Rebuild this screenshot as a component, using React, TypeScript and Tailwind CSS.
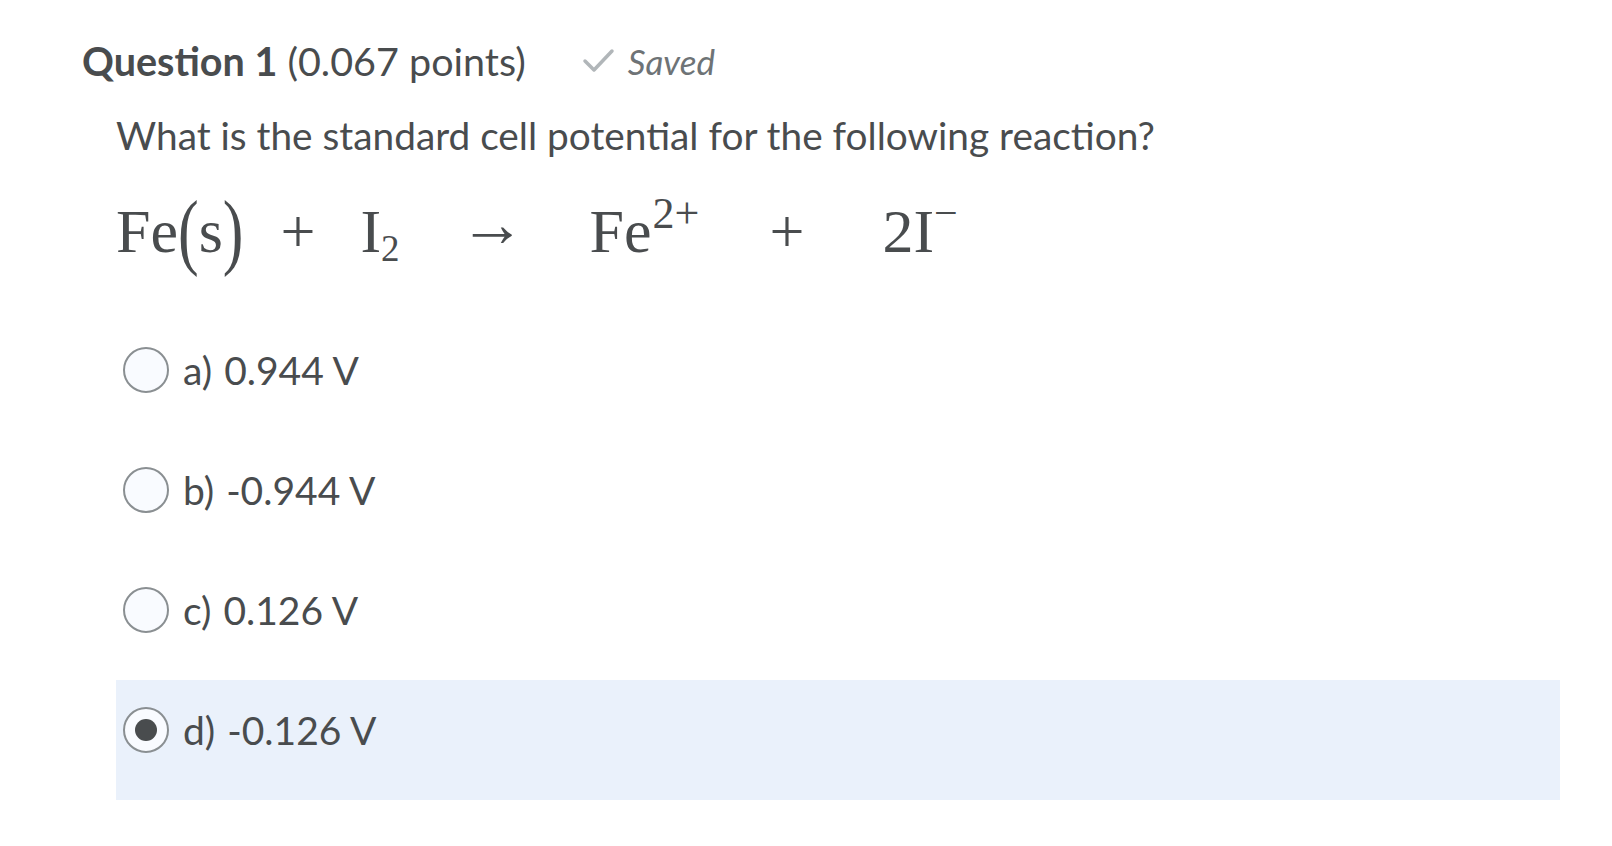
import React, { useState } from "react";

const options = [
  { id: "a", label: "a)", value: "0.944 V" },
  { id: "b", label: "b)", value: "-0.944 V" },
  { id: "c", label: "c)", value: "0.126 V" },
  { id: "d", label: "d)", value: "-0.126 V" },
];

const Radio: React.FC<{ checked: boolean }> = ({ checked }) => (
  <span className="flex h-[46px] w-[46px] shrink-0 items-center justify-center rounded-full border-2 border-[#8a8f92] bg-[#f9fbff]">
    {checked && <span className="h-[22px] w-[22px] rounded-full bg-[#494c4e]" />}
  </span>
);

export default function App() {
  const [selected, setSelected] = useState("d");

  return (
    <div className="min-h-screen bg-white text-[#494c4e]" style={{ fontFamily: "Lato, 'Open Sans', sans-serif" }}>
      <div className="pl-[82px] pt-[38px] pr-[52px]">
        {/* heading */}
        <div className="flex h-[46px] items-center">
          <h2 className="text-[39.5px] leading-[46px]">
            <span className="font-bold">Question 1</span> (0.067 points)
          </h2>
          <span className="ml-[56px] flex items-center text-[#6e7376]">
            <svg width="34" height="28" viewBox="0 0 34 28" className="mr-[12px]">
              <polyline points="3,14 12,23 30,4" fill="none" stroke="#b1b6b9" strokeWidth="3.5" strokeLinecap="round" strokeLinejoin="round" />
            </svg>
            <span className="text-[35px] italic leading-[46px]">Saved</span>
          </span>
        </div>

        <div className="pl-[34px]">
          {/* question text */}
          <p className="mt-[28px] text-[38.8px] leading-[46px]">
            What is the standard cell potential for the following reaction?
          </p>

          {/* equation */}
          <div
            className="mt-[36px] flex h-[72px] items-baseline text-[62px] leading-[72px] text-[#494c4e]"
            style={{ fontFamily: "'Liberation Serif', 'Times New Roman', serif" }}
          >
            <span>Fe</span>
            <span className="inline-block scale-y-[1.35]">(</span>
            <span>s</span>
            <span className="inline-block scale-y-[1.35]">)</span>
            <span className="ml-[37px]">+</span>
            <span className="ml-[45px]">
              I<sub className="text-[37px] leading-none">2</sub>
            </span>
            <span className="relative -top-[6px] ml-[60px] text-[66px]">→</span>
            <span className="ml-[64px]">
              Fe<sup className="top-[-0.55em] ml-[1px] text-[44px] leading-none">2+</sup>
            </span>
            <span className="ml-[70px]">+</span>
            <span className="ml-[78px]">
              2I<sup className="top-[-0.6em] text-[42px] leading-none">−</sup>
            </span>
          </div>

          {/* options */}
          <div className="mt-[54px]">
            {options.map((o) => (
              <div
                key={o.id}
                onClick={() => setSelected(o.id)}
                className={`flex h-[120px] cursor-pointer items-start pl-[7px] pt-[27px] ${
                  selected === o.id ? "bg-[#eaf1fb]" : ""
                }`}
              >
                <Radio checked={selected === o.id} />
                <span className="ml-[14px] text-[39px] leading-[46px]">
                  <span className="mr-[12px]">{o.label}</span>
                  {o.value}
                </span>
              </div>
            ))}
          </div>
        </div>
      </div>
    </div>
  );
}
